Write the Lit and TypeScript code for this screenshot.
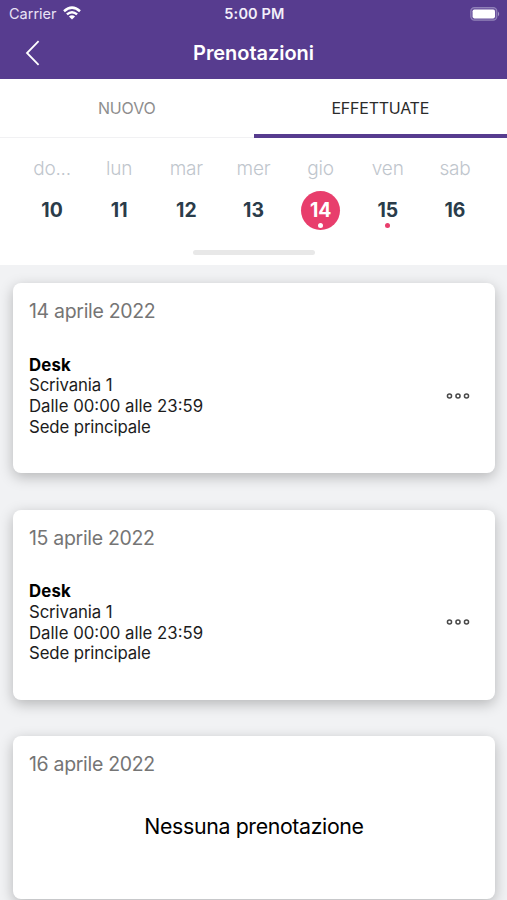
import { LitElement, html, css, svg } from "lit";
import { customElement, property } from "lit/decorators.js";
import { classMap } from "lit/directives/class-map.js";

interface Day {
  name: string;
  number: number;
  selected?: boolean;
  marked?: boolean;
}

interface Booking {
  title: string;
  desk: string;
  time: string;
  place: string;
}

const DAYS: Day[] = [
  { name: "do...", number: 10 },
  { name: "lun", number: 11 },
  { name: "mar", number: 12 },
  { name: "mer", number: 13 },
  { name: "gio", number: 14, selected: true, marked: true },
  { name: "ven", number: 15, marked: true },
  { name: "sab", number: 16 },
];

const DESK: Booking = {
  title: "Desk",
  desk: "Scrivania 1",
  time: "Dalle 00:00 alle 23:59",
  place: "Sede principale",
};

@customElement("app-header")
export class AppHeader extends LitElement {
  static styles = css`
    :host {
      display: block;
      height: 79px;
      background: #573c8f;
      color: #fff;
    }
    .status {
      display: grid;
      grid-template-columns: 1fr auto 1fr;
      align-items: center;
      height: 27px;
      padding: 0 7px 0 9px;
      font-size: 14.5px;
      line-height: 27px;
    }
    .carrier {
      display: flex;
      align-items: center;
      gap: 6px;
      color: #e9e2f5;
      letter-spacing: 0;
    }
    .clock {
      font-weight: 600;
      letter-spacing: 0.15px;
      color: #f3effa;
    }
    .battery {
      justify-self: end;
    }
    svg {
      display: block;
    }
    .wifi {
      margin-top: -1px;
    }
    .bar {
      display: grid;
      grid-template-columns: 64px 1fr 64px;
      align-items: center;
      height: 52px;
    }
    .back {
      padding-left: 25px;
      margin-top: -1px;
    }
    h1 {
      margin: 0;
      text-align: center;
      font-size: 20px;
      font-weight: 600;
      line-height: 52px;
      letter-spacing: -0.05px;
    }
  `;

  render() {
    return html`
      <div class="status">
        <div class="carrier">
          <span>Carrier</span>
          <svg class="wifi" width="18" height="14" viewBox="0 0 18 14" fill="none" stroke="#fff" stroke-width="2.5">
            <path d="M1 5.2Q9 -2 17 5.2" />
            <path d="M3.9 8.4Q9 4 14.1 8.4" />
            <path d="M9 13.6L5.9 10.4Q9 8 12.1 10.4Z" fill="#fff" stroke="none" />
          </svg>
        </div>
        <div class="clock">5:00 PM</div>
        <svg class="battery" width="30" height="14" viewBox="0 0 30 14">
          <rect x="0.8" y="0.6" width="26" height="12.6" rx="3.6" fill="#6b529e" stroke="#9081b8" stroke-width="1.2" />
          <rect x="2.6" y="2.4" width="22.4" height="9" rx="1.8" fill="#fff" />
          <path d="M28 4.6Q30.4 6.9 28 9.2Z" fill="#a497c4" />
        </svg>
      </div>
      <div class="bar">
        <svg class="back" width="15" height="26" viewBox="0 0 15 26" fill="none" stroke="#fff" stroke-width="1.8">
          <path d="M13.6 1.2L2 13L13.6 24.8" />
        </svg>
        <h1>Prenotazioni</h1>
      </div>
    `;
  }
}

@customElement("week-strip")
export class WeekStrip extends LitElement {
  @property({ attribute: false }) days: Day[] = [];

  static styles = css`
    :host {
      display: block;
      box-sizing: border-box;
      height: 127px;
      padding: 19px 18.5px 0;
      background: #fff;
    }
    .week {
      display: grid;
      grid-template-columns: repeat(7, 1fr);
      justify-items: center;
    }
    .day {
      display: flex;
      flex-direction: column;
      align-items: center;
    }
    .name {
      height: 24px;
      line-height: 23px;
      font-size: 19px;
      font-weight: 300;
      letter-spacing: -0.2px;
      color: #bfc6cd;
    }
    .number {
      position: relative;
      width: 39px;
      height: 39px;
      margin-top: 10px;
      border-radius: 50%;
      line-height: 39px;
      text-align: center;
      font-size: 19.4px;
      font-weight: 650;
      color: #2a3c4a;
    }
    .selected {
      background: #e83e6c;
      color: #fff;
    }
    .marked::after {
      content: "";
      position: absolute;
      left: 17px;
      bottom: 2px;
      width: 5px;
      height: 5px;
      border-radius: 50%;
      background: #e83e6c;
    }
    .selected::after {
      background: #fff;
    }
    .knob {
      width: 122px;
      height: 5px;
      margin: 20px auto 0;
      border-radius: 3px;
      background: #e8e8e8;
    }
  `;

  render() {
    return html`
      <div class="week">
        ${this.days.map(
          (d) => html`<div class="day">
            <div class="name">${d.name}</div>
            <div class=${classMap({ number: true, selected: !!d.selected, marked: !!d.marked })}>${d.number}</div>
          </div>`
        )}
      </div>
      <div class="knob"></div>
    `;
  }
}

@customElement("booking-card")
export class BookingCard extends LitElement {
  @property() date = "";
  @property({ attribute: false }) booking?: Booking;

  static styles = css`
    :host {
      display: block;
      box-sizing: border-box;
      height: 190px;
      padding: 16px;
      border-radius: 8px;
      background: #fff;
      box-shadow: 0 4px 14px rgba(0, 0, 0, 0.25);
    }
    :host([empty]) {
      height: 163px;
    }
    .date {
      height: 24px;
      line-height: 24px;
      font-size: 19.5px;
      letter-spacing: -0.32px;
      color: #757575;
    }
    .row {
      display: flex;
      justify-content: space-between;
      align-items: center;
      margin-top: 31.6px;
      padding-right: 9px;
      font-size: 16.8px;
      line-height: 20.8px;
      color: #1c1c1c;
    }
    .title {
      font-weight: 700;
      letter-spacing: 0.15px;
      color: #000;
    }
    .tight {
      letter-spacing: -0.12px;
    }
    .more {
      margin-top: -1px;
    }
    .none {
      margin-top: 31.5px;
      text-align: center;
      font-size: 21.3px;
      line-height: 36px;
      letter-spacing: -0.35px;
      color: #000;
    }
  `;

  render() {
    const b = this.booking;
    return html`
      <div class="date">${this.date}</div>
      ${b
        ? html`<div class="row">
            <div>
              <div class="title">${b.title}</div>
              <div class="tight">${b.desk}</div>
              <div>${b.time}</div>
              <div class="tight">${b.place}</div>
            </div>
            <svg class="more" width="24" height="8" viewBox="0 0 24 8" fill="none" stroke="#484848" stroke-width="1.5">
              ${[3.5, 12, 20.5].map((x) => svg`<circle cx=${x} cy="4" r="2.05" />`)}
            </svg>
          </div>`
        : html`<div class="none">Nessuna prenotazione</div>`}
    `;
  }
}

@customElement("app-root")
export class AppRoot extends LitElement {
  static styles = css`
    :host {
      display: block;
      height: 900px;
      overflow: hidden;
      background: #f1f2f4;
      font-family: Inter, "Liberation Sans", sans-serif;
    }
    .tabs {
      display: grid;
      grid-template-columns: 1fr 1fr;
      height: 59px;
      background: #fff;
    }
    .tab {
      box-sizing: border-box;
      height: 59px;
      border-bottom: 1px solid #f1f1f3;
      text-align: center;
      line-height: 59px;
      font-size: 16px;
      letter-spacing: -0.15px;
      color: #8e8e8e;
    }
    .active {
      border-bottom: 4px solid #573c8f;
      letter-spacing: -0.25px;
      color: #2b2b2b;
    }
    .list {
      display: flex;
      flex-direction: column;
      gap: 36.5px;
      padding: 18px 12px 0 13px;
    }
  `;

  render() {
    return html`
      <app-header></app-header>
      <div class="tabs">
        <div class="tab">NUOVO</div>
        <div class="tab active">EFFETTUATE</div>
      </div>
      <week-strip .days=${DAYS}></week-strip>
      <div class="list">
        <booking-card date="14 aprile 2022" .booking=${DESK}></booking-card>
        <booking-card date="15 aprile 2022" .booking=${DESK}></booking-card>
        <booking-card date="16 aprile 2022" empty></booking-card>
      </div>
    `;
  }
}
